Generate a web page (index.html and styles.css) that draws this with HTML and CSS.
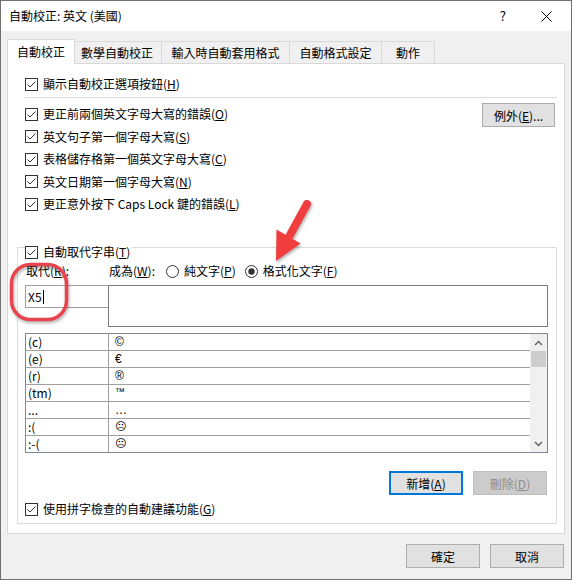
FILE: index.html
```html
<!DOCTYPE html>
<html lang="zh-Hant">
<head>
  <meta charset="UTF-8" />
  <title>自動校正: 英文 (美國)</title>
  <link rel="stylesheet" href="styles.css">
</head>
<body>

  <div class="window">
    <div class="titlebar">
      <span class="title">自動校正: 英文 (美國)</span>
      <span class="help">?</span>
      <svg class="close" width="11" height="11" viewBox="0 0 11 11"><path d="M0.5 0.5L10.5 10.5M10.5 0.5L0.5 10.5" stroke="#000" stroke-width="1" /></svg>
    </div>

    <div class="tabs">
      <div class="tab active">自動校正</div>
      <div class="tab">數學自動校正</div>
      <div class="tab wide">輸入時自動套用格式</div>
      <div class="tab wide">自動格式設定</div>
      <div class="tab">動作</div>
    </div>

    <div class="panel">
      <div class="check-row first">
        <svg class="box" width="13" height="13" viewBox="0 0 13 13"><rect x="0.5" y="0.5" width="12" height="12" fill="#fff" stroke="#333" /><polyline points="2.5,6.5 5,9 10.5,3.5" fill="none" stroke="#333" /></svg>
        <span>顯示自動校正選項按鈕(<u>H</u>)</span>
      </div>
      <div class="sep"></div>

      <div class="opts">
        <div class="opt-list">
          <div class="check-row">
            <svg class="box" width="13" height="13" viewBox="0 0 13 13"><rect x="0.5" y="0.5" width="12" height="12" fill="#fff" stroke="#333" /><polyline points="2.5,6.5 5,9 10.5,3.5" fill="none" stroke="#333" /></svg>
            <span>更正前兩個英文字母大寫的錯誤(<u>O</u>)</span>
          </div>
          <div class="check-row">
            <svg class="box" width="13" height="13" viewBox="0 0 13 13"><rect x="0.5" y="0.5" width="12" height="12" fill="#fff" stroke="#333" /><polyline points="2.5,6.5 5,9 10.5,3.5" fill="none" stroke="#333" /></svg>
            <span>英文句子第一個字母大寫(<u>S</u>)</span>
          </div>
          <div class="check-row">
            <svg class="box" width="13" height="13" viewBox="0 0 13 13"><rect x="0.5" y="0.5" width="12" height="12" fill="#fff" stroke="#333" /><polyline points="2.5,6.5 5,9 10.5,3.5" fill="none" stroke="#333" /></svg>
            <span>表格儲存格第一個英文字母大寫(<u>C</u>)</span>
          </div>
          <div class="check-row">
            <svg class="box" width="13" height="13" viewBox="0 0 13 13"><rect x="0.5" y="0.5" width="12" height="12" fill="#fff" stroke="#333" /><polyline points="2.5,6.5 5,9 10.5,3.5" fill="none" stroke="#333" /></svg>
            <span>英文日期第一個字母大寫(<u>N</u>)</span>
          </div>
          <div class="check-row">
            <svg class="box" width="13" height="13" viewBox="0 0 13 13"><rect x="0.5" y="0.5" width="12" height="12" fill="#fff" stroke="#333" /><polyline points="2.5,6.5 5,9 10.5,3.5" fill="none" stroke="#333" /></svg>
            <span>更正意外按下 Caps Lock 鍵的錯誤(<u>L</u>)</span>
          </div>
        </div>
        <button class="btn btn-exc">例外(<u>E</u>)...</button>
      </div>

      <fieldset class="group">
        <legend>
          <svg class="box" width="13" height="13" viewBox="0 0 13 13"><rect x="0.5" y="0.5" width="12" height="12" fill="#fff" stroke="#333" /><polyline points="2.5,6.5 5,9 10.5,3.5" fill="none" stroke="#333" /></svg>
          <span>自動取代字串(<u>T</u>)</span>
        </legend>

        <div class="labels">
          <span class="lbl-r">取代(<u>R</u>):</span>
          <span class="lbl-w">成為(<u>W</u>):</span>
          <svg class="radio" width="13" height="13" viewBox="0 0 13 13"><circle cx="6.5" cy="6.5" r="6" fill="#fff" stroke="#333" /></svg>
          <span class="radio-text">純文字(<u>P</u>)</span>
          <svg class="radio second" width="13" height="13" viewBox="0 0 13 13"><circle cx="6.5" cy="6.5" r="6" fill="#fff" stroke="#333" /><circle cx="6.5" cy="6.5" r="3.2" fill="#333" /></svg>
          <span class="radio-text">格式化文字(<u>F</u>)</span>
        </div>

        <div class="inputs">
          <div class="replace">X5<span class="caret"></span></div>
          <div class="with"></div>
        </div>

        <div class="list">
          <div class="rows">
            <div class="item"><span class="key">(c)</span><span class="val">©</span></div>
            <div class="item"><span class="key">(e)</span><span class="val">€</span></div>
            <div class="item"><span class="key">(r)</span><span class="val">®</span></div>
            <div class="item"><span class="key">(tm)</span><span class="val tm">™</span></div>
            <div class="item"><span class="key">...</span><span class="val">…</span></div>
            <div class="item"><span class="key">:(</span><span class="val face">☹</span></div>
            <div class="item"><span class="key">:-(</span><span class="val face">☹</span></div>
          </div>
          <div class="scroll">
            <div class="arrow"><svg width="9" height="6" viewBox="0 0 9 6"><path d="M1 5L4.5 1.5L8 5" fill="none" stroke="#606060" stroke-width="1.4" /></svg></div>
            <div class="thumb"></div>
            <div class="track"></div>
            <div class="arrow"><svg width="9" height="6" viewBox="0 0 9 6"><path d="M1 1L4.5 4.5L8 1" fill="none" stroke="#606060" stroke-width="1.4" /></svg></div>
          </div>
        </div>

        <div class="actions">
          <button class="btn focus">新增(<u>A</u>)</button>
          <button class="btn" disabled>刪除(<u>D</u>)</button>
        </div>

        <div class="check-row spell">
          <svg class="box" width="13" height="13" viewBox="0 0 13 13"><rect x="0.5" y="0.5" width="12" height="12" fill="#fff" stroke="#333" /><polyline points="2.5,6.5 5,9 10.5,3.5" fill="none" stroke="#333" /></svg>
          <span>使用拼字檢查的自動建議功能(<u>G</u>)</span>
        </div>
      </fieldset>
    </div>

    <div class="footer">
      <button class="btn">確定</button>
      <button class="btn">取消</button>
    </div>
  </div>

  <!-- red annotation marks drawn over the dialog -->
  <svg class="marks" width="572" height="580" viewBox="0 0 572 580">
    <rect x="11.5" y="264.5" width="55" height="55" rx="19" fill="none" stroke="#e9444d" stroke-width="3.5" />
    <line x1="307" y1="204" x2="290" y2="235" stroke="#f03e3e" stroke-width="8" stroke-linecap="round" />
    <polygon points="276,261 300.5,243.5 276.5,229.5" fill="#f03e3e" />
  </svg>

</body>
</html>
```

FILE: styles.css
```css
body {
  margin: 0;
  font-family: "Noto Sans CJK TC", sans-serif;
  font-size: 12px;
  line-height: 16px;
  color: #000;
}

.window {
  width: 572px;
  height: 580px;
  box-sizing: border-box;
  border: 1px solid #707070;
  background: #f0f0f0;
}

.titlebar {
  height: 30px;
  background: #fff;
  display: flex;
  align-items: center;
  padding: 0 19px 0 8px;
}

.title {
  flex: 1;
}

.help {
  font-size: 13px;
  margin-right: 35px;
}

/* tabs */
.tabs {
  display: flex;
  align-items: flex-end;
  height: 32px;
  padding-left: 8px;
}

.tab {
  height: 22px;
  min-width: 54px;
  box-sizing: border-box;
  border: 1px solid #d9d9d9;
  border-bottom: none;
  padding: 0 8px;
  display: flex;
  align-items: center;
  justify-content: center;
  background: #f0f0f0;
}

.tab.wide {
  padding: 0 9.5px;
}

.tab + .tab {
  margin-left: -1px;
}

.tab.active {
  height: 25px;
  margin: 0 -2px -1px;
  padding: 0 9px 1px;
  background: #fff;
  position: relative;
  z-index: 1;
}

.panel {
  margin: 0 6px;
  background: #fff;
  border: 1px solid #d9d9d9;
  padding: 9px 7px 9px 9px;
}

.check-row {
  display: flex;
  align-items: center;
  gap: 5px;
  height: 22.5px;
  padding-left: 8px;
}

.check-row.first {
  height: 22px;
}

.box, .radio {
  flex: none;
}

.sep {
  height: 1px;
  background: #dcdcdc;
  margin: 2px 0 0 8px;
}

.opts {
  display: flex;
  justify-content: space-between;
  align-items: flex-start;
  margin-top: 5px;
}

.btn {
  width: 74px;
  height: 24px;
  box-sizing: border-box;
  border: 1px solid #adadad;
  background: #e1e1e1;
  font-family: inherit;
  font-size: 12px;
  color: #000;
  padding: 0;
}

.btn-exc {
  width: 73px;
  margin-right: 2px;
}

.btn.focus {
  border: 2px solid #0078d7;
}

.btn:disabled {
  background: #cccccc;
  border-color: #bfbfbf;
  color: #8a8a8a;
}

/* replacement group */
.group {
  margin: 18.5px 0 0;
  padding: 0 8px 6px 7px;
  border: 1px solid #dcdcdc;
  min-width: 0;
}

.group legend {
  display: flex;
  align-items: center;
  gap: 5px;
  padding: 10px 2px 0 0;
  height: 16px;
}

.labels {
  display: flex;
  align-items: center;
  height: 16px;
  margin-top: 3px;
}

.lbl-r {
  width: 84px;
  padding-left: 1px;
  box-sizing: border-box;
}

.lbl-w {
  margin-right: 11px;
}

.radio-text {
  margin-left: 5px;
}

.radio.second {
  margin-left: 9px;
}

.inputs {
  display: flex;
  margin-top: 6px;
  height: 42px;
}

.replace {
  width: 84px;
  height: 23px;
  box-sizing: border-box;
  border: 1px solid #a0a0a0;
  padding-left: 2px;
  display: flex;
  align-items: center;
}

.caret {
  width: 1px;
  height: 14px;
  background: #000;
  margin-left: 1px;
}

.with {
  flex: 1;
  margin-left: -1px;
  border: 1px solid #7a7a7a;
}

.list {
  display: flex;
  margin-top: 6px;
  height: 120px;
  box-sizing: border-box;
  border: 1px solid #828790;
}

.rows {
  flex: 1;
}

.item {
  display: flex;
  align-items: center;
  height: 17px;
  box-sizing: border-box;
  border-bottom: 1px solid #a0a0a0;
}

.item:last-child {
  border-bottom: none;
  height: 16px;
}

.key {
  width: 83px;
  height: 100%;
  box-sizing: border-box;
  border-right: 1px solid #a0a0a0;
  padding-left: 2px;
}

.val {
  padding-left: 6px;
  font-family: "Liberation Sans", sans-serif;
  font-size: 12px;
}

.val.tm {
  font-size: 10px;
  line-height: 10px;
  align-self: flex-start;
  padding-top: 2px;
}

.val.face {
  font-family: "DejaVu Sans", sans-serif;
  font-size: 11px;
}

.scroll {
  width: 17px;
  display: flex;
  flex-direction: column;
  background: #f0f0f0;
}

.arrow {
  height: 17px;
  display: flex;
  align-items: center;
  justify-content: center;
}

.thumb {
  height: 16px;
  background: #cdcdcd;
  margin: 0 1px;
}

.track {
  flex: 1;
}

.actions {
  display: flex;
  justify-content: flex-end;
  gap: 10px;
  margin-top: 18px;
  padding-right: 1px;
}

.check-row.spell {
  height: 16px;
  margin-top: 6px;
  padding-left: 0;
}

.footer {
  display: flex;
  justify-content: flex-end;
  gap: 10px;
  padding: 10px 7px 0 0;
}

.marks {
  position: absolute;
  top: 0;
  left: 0;
  pointer-events: none;
  filter: drop-shadow(1px 2px 1.5px rgba(0, 0, 0, 0.3));
}
```
